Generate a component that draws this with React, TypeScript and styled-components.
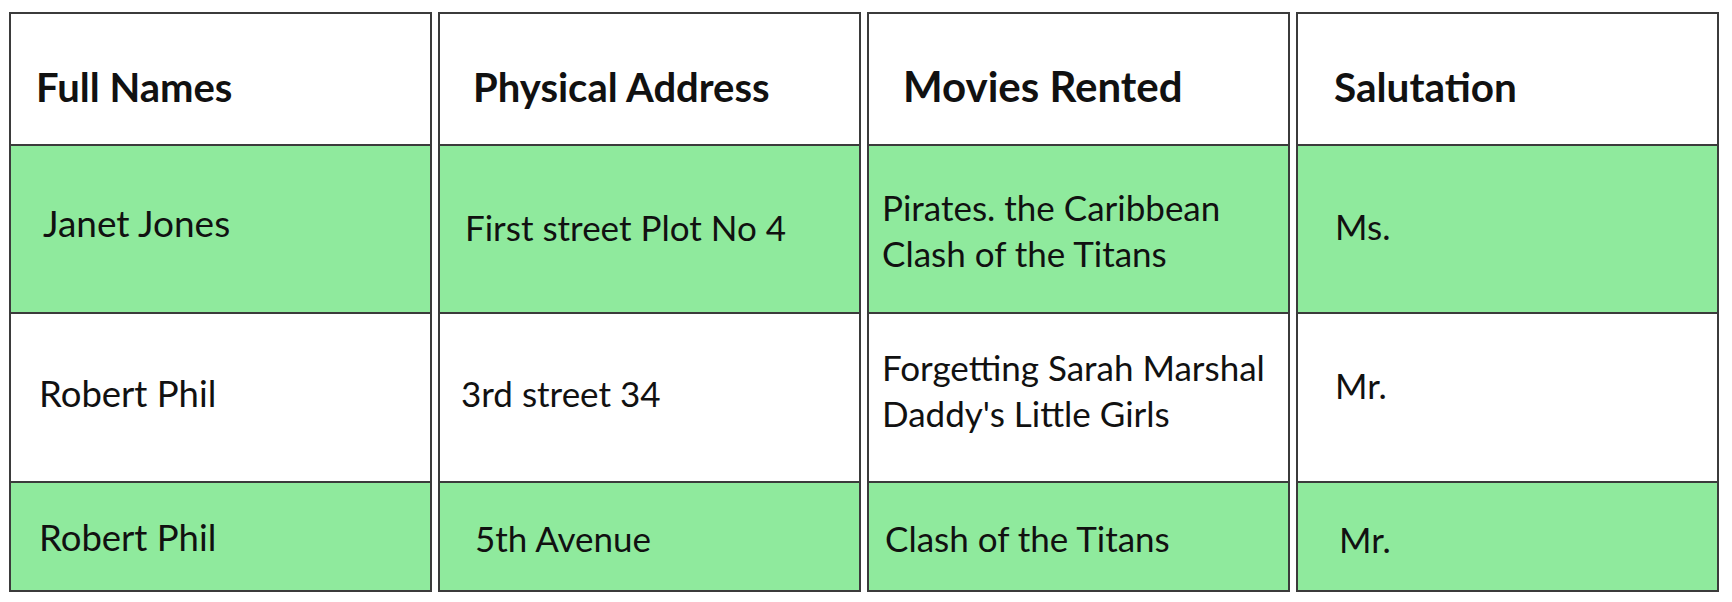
import React from "react";
import styled, { createGlobalStyle } from "styled-components";

const GlobalStyle = createGlobalStyle`
  html, body {
    margin: 0;
    padding: 0;
    background: #ffffff;
  }
  body {
    font-family: "Lato", "Noto Sans", sans-serif;
    color: #111111;
  }
`;

const Page = styled.div`
  width: 1732px;
  height: 602px;
  box-sizing: border-box;
  padding: 12px 0 0 9px;
  display: flex;
  gap: 6px;
  background: #ffffff;
`;

const Column = styled.div`
  width: 423px;
  box-sizing: border-box;
  border: 2px solid #3b3b3b;
  display: flex;
  flex-direction: column;
  align-self: flex-start;
`;

type CellProps = { $h: number; $green?: boolean; $first?: boolean; $indent: number };

const Cell = styled.div<CellProps>`
  height: ${(p) => p.$h}px;
  box-sizing: content-box;
  border-top: ${(p) => (p.$first ? "none" : "2px solid #3b3b3b")};
  background: ${(p) => (p.$green ? "#8fea9d" : "#ffffff")};
  padding-left: ${(p) => p.$indent}px;
  overflow: hidden;
`;

const Text = styled.div<{ $pad: number; $bold?: boolean; $size: number }>`
  padding-top: ${(p) => p.$pad}px;
  font-size: ${(p) => p.$size}px;
  line-height: 46px;
  font-weight: ${(p) => (p.$bold ? 700 : 400)};
  white-space: nowrap;
`;

type CellData = { lines: string[]; indent: number; pad: number; size?: number };

const rowHeights = [130, 166, 167, 107];
const rowGreen = [false, true, false, true];

const columns: CellData[][] = [
  [
    { lines: ["Full Names"], indent: 25, pad: 50, size: 40 },
    { lines: ["Janet Jones"], indent: 32, pad: 54, size: 37 },
    { lines: ["Robert Phil"], indent: 28, pad: 56, size: 36.5 },
    { lines: ["Robert Phil"], indent: 28, pad: 31, size: 36.5 },
  ],
  [
    { lines: ["Physical Address"], indent: 33, pad: 50, size: 40 },
    { lines: ["First street Plot No 4"], indent: 25, pad: 58 },
    { lines: ["3rd street 34"], indent: 21, pad: 56 },
    { lines: ["5th Avenue"], indent: 35, pad: 32 },
  ],
  [
    { lines: ["Movies Rented"], indent: 34, pad: 49, size: 42 },
    { lines: ["Pirates. the Caribbean", "Clash of the Titans"], indent: 13, pad: 38 },
    { lines: ["Forgetting Sarah Marshal", "Daddy's Little Girls"], indent: 13, pad: 30 },
    { lines: ["Clash of the Titans"], indent: 16, pad: 32 },
  ],
  [
    { lines: ["Salutation"], indent: 36, pad: 50, size: 40.5 },
    { lines: ["Ms."], indent: 37, pad: 57 },
    { lines: ["Mr."], indent: 37, pad: 48 },
    { lines: ["Mr."], indent: 41, pad: 33 },
  ],
];

export default function App() {
  return (
    <>
      <GlobalStyle />
      <Page>
        {columns.map((col, ci) => (
          <Column key={ci}>
            {col.map((cell, ri) => (
              <Cell
                key={ri}
                $h={rowHeights[ri]}
                $green={rowGreen[ri]}
                $first={ri === 0}
                $indent={cell.indent}
              >
                <Text $pad={cell.pad} $bold={ri === 0} $size={cell.size ?? 35}>
                  {cell.lines.map((l, li) => (
                    <div key={li}>{l}</div>
                  ))}
                </Text>
              </Cell>
            ))}
          </Column>
        ))}
      </Page>
    </>
  );
}
